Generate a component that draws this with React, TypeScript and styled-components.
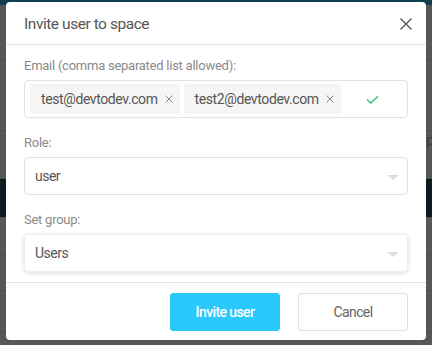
import React from "react";
import styled, { createGlobalStyle } from "styled-components";

const Global = createGlobalStyle`
  html, body { margin: 0; padding: 0; }
  body { width: 432px; height: 345px; overflow: hidden; font-family: Roboto, "Liberation Sans", sans-serif; }
`;

const Page = styled.div`
  position: relative;
  width: 432px;
  height: 345px;
  background: #575757;
  overflow: hidden;
`;

const TopBar = styled.div`
  height: 5px;
  background: #0e4050;
`;

const BgRow = styled.div<{ $h: number; $bg?: string }>`
  height: ${(p) => p.$h}px;
  background: ${(p) => p.$bg || "transparent"};
  border-bottom: 1px solid #4c4c4c;
`;

const Overlay = styled.div`
  position: absolute;
  inset: 0;
  display: flex;
  justify-content: center;
  align-items: flex-start;
  padding-top: 2px;
`;

const Modal = styled.div`
  width: 420px;
  height: 338px;
  background: #fff;
  border-radius: 4px;
  display: flex;
  flex-direction: column;
  box-sizing: border-box;
`;

const Header = styled.div`
  height: 42px;
  display: flex;
  align-items: center;
  justify-content: space-between;
  padding: 0 14px 0 18px;
  border-bottom: 1px solid #e4e4e4;
  flex-shrink: 0;
`;

const Title = styled.div`
  font-size: 15.5px;
  letter-spacing: -0.45px;
  color: #555;
  padding-top: 1px;
`;

const Body = styled.div`
  padding: 13px 18px 10px;
  display: flex;
  flex-direction: column;
  border-bottom: 1px solid #e4e4e4;
`;

const Label = styled.div`
  font-size: 13px;
  letter-spacing: -0.25px;
  color: #8a8a8a;
  height: 16px;
  line-height: 16px;
  margin-bottom: 6px;
`;

const Field = styled.div<{ $shadow?: boolean; $last?: boolean }>`
  height: 38px;
  box-sizing: border-box;
  border: 1px solid ${(p) => (p.$shadow ? "#ececec" : "#e1e1e6")};
  border-radius: 4px;
  display: flex;
  align-items: center;
  margin-bottom: ${(p) => (p.$last ? 0 : 17)}px;
  box-shadow: ${(p) => (p.$shadow ? "0 1px 4px rgba(0,0,0,0.15)" : "none")};
`;

const Chips = styled.div`
  display: flex;
  align-items: center;
  gap: 4px;
  padding-left: 5px;
  flex: 1;
`;

const Chip = styled.div`
  height: 30px;
  background: #f5f5f5;
  border-radius: 2px;
  display: flex;
  align-items: center;
  padding: 0 7px 0 11px;
  font-size: 14px;
  letter-spacing: -0.4px;
  color: #555;
  gap: 7px;
`;

const ChipX = styled.svg`
  width: 8px;
  height: 8px;
  display: block;
`;

const Check = styled.svg`
  width: 13px;
  height: 9px;
  margin-right: 28px;
`;

const SelectText = styled.div`
  font-size: 14px;
  letter-spacing: -0.5px;
  color: #555;
  padding-left: 10px;
  flex: 1;
`;

const Arrow = styled.div`
  width: 0;
  height: 0;
  border-left: 6px solid transparent;
  border-right: 6px solid transparent;
  border-top: 5px solid #dcdcdc;
  margin-right: 8px;
  margin-top: 2px;
`;

const Footer = styled.div`
  display: flex;
  justify-content: flex-end;
  gap: 18px;
  padding: 10px 18px 0;
`;

const Button = styled.button<{ $primary?: boolean }>`
  width: 110px;
  height: 38px;
  border-radius: 3px;
  font-family: Roboto, "Liberation Sans", sans-serif;
  font-size: 14px;
  letter-spacing: -0.6px;
  font-weight: ${(p) => (p.$primary ? 500 : 400)};
  color: ${(p) => (p.$primary ? "#fff" : "#666")};
  background: ${(p) => (p.$primary ? "#2bc8fc" : "#fff")};
  border: 1px solid ${(p) => (p.$primary ? "#2bc8fc" : "#dedee3")};
  cursor: pointer;
  padding: 0;
`;

const CloseIcon = styled.svg`
  width: 12px;
  height: 12px;
  margin-top: 1px;
`;

const SideText = styled.div`
  position: absolute;
  right: -2px;
  top: 132px;
  font-size: 14px;
  color: #3a3a3a;
`;

const X = () => (
  <ChipX viewBox="0 0 8 8">
    <path d="M0.5 0.5L7.5 7.5M7.5 0.5L0.5 7.5" stroke="#888" strokeWidth="1" />
  </ChipX>
);

export default function App() {
  return (
    <>
      <Global />
      <Page>
        <TopBar />
        <BgRow $h={54} />
        <BgRow $h={70} />
        <BgRow $h={47} />
        <BgRow $h={38} $bg="#0f1b20" />
        <BgRow $h={36} />
        <BgRow $h={35} />
        <BgRow $h={40} />
        <SideText>pp</SideText>
        <Overlay>
          <Modal>
            <Header>
              <Title>Invite user to space</Title>
              <CloseIcon viewBox="0 0 12 12">
                <path d="M0.5 0.5L11.5 11.5M11.5 0.5L0.5 11.5" stroke="#555" strokeWidth="1.4" />
              </CloseIcon>
            </Header>
            <Body>
              <Label>Email (comma separated list allowed):</Label>
              <Field>
                <Chips>
                  <Chip>
                    test@devtodev.com <X />
                  </Chip>
                  <Chip>
                    test2@devtodev.com <X />
                  </Chip>
                </Chips>
                <Check viewBox="0 0 13 9">
                  <path d="M1 4.5L4.8 8L12 1.2" stroke="#3cc37a" strokeWidth="1.5" fill="none" />
                </Check>
              </Field>
              <Label>Role:</Label>
              <Field>
                <SelectText>user</SelectText>
                <Arrow />
              </Field>
              <Label>Set group:</Label>
              <Field $shadow $last>
                <SelectText>Users</SelectText>
                <Arrow />
              </Field>
            </Body>
            <Footer>
              <Button $primary>Invite user</Button>
              <Button>Cancel</Button>
            </Footer>
          </Modal>
        </Overlay>
      </Page>
    </>
  );
}
